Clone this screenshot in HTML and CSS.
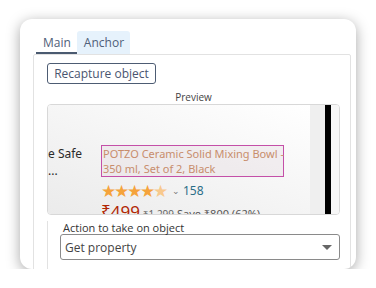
FILE: index.html
```html
<!DOCTYPE html>
<html lang="en">
<head>
  <meta charset="UTF-8">
  <title>Object settings</title>
  <link rel="stylesheet" href="styles.css">
</head>
<body>
  <div class="dialog">
    <div class="tabs">
      <span class="tab active">Main</span>
      <span class="tab hover">Anchor</span>
    </div>
    <div class="panel">
      <button class="recapture">Recapture object</button>
      <div class="preview-label">Preview</div>
      <div class="preview">
        <div class="shot">
          <div class="left-col">
            <div>e Safe</div>
            <div>...</div>
          </div>
          <div class="product">
            <div class="title">POTZO Ceramic Solid Mixing Bowl -<br>350 ml, Set of 2, Black</div>
            <div class="rating">
              <span class="stars">★★★★<span class="half">★</span></span>
              <span class="caret">⌄</span>
              <span class="count">158</span>
            </div>
            <div class="price">
              <span class="now">₹499</span>
              <span class="was">₹1,299</span>
              <span class="save">Save ₹800 (62%)</span>
            </div>
          </div>
        </div>
        <div class="scroll-gap"></div>
        <div class="scroll-bar"></div>
        <div class="scroll-rest"></div>
      </div>
      <div class="action">
        <label class="action-label">Action to take on object</label>
        <div class="select">
          <span>Get property</span>
          <span class="arrow"></span>
        </div>
      </div>
    </div>
  </div>
</body>
</html>
```

FILE: styles.css
```css
body {
  margin: 0;
  background-color: #fff;
  font-family: 'Open Sans', 'Noto Sans', sans-serif;
  color: #3c4658;
}
.dialog {
  margin: 19px 0 0 20px;
  width: 336px;
  height: 250px;
  box-sizing: border-box;
  padding: 12px 5px 0 13px;
  background-color: #fff;
  border-radius: 12px;
  box-shadow: 0 3px 14px rgba(0, 0, 0, 0.35);
  overflow: hidden;
}
.tabs {
  display: flex;
  margin-left: 3px;
  height: 23px;
}
.tab {
  font-size: 12px;
  color: #4f6079;
  padding: 3px 6px 0 7px;
  box-sizing: border-box;
  height: 23px;
}
.tab.active {
  border-bottom: 2px solid #4a5a70;
}
.tab.hover {
  background-color: #e6f2fc;
  border-radius: 3px 3px 0 0;
}
.panel {
  border: 1px solid #e2e2e2;
  border-radius: 2px;
  height: 240px;
  padding: 8px 10px 0 13px;
}
.recapture {
  display: block;
  font-family: inherit;
  font-size: 12px;
  color: #4a5570;
  background: #fff;
  border: 1px solid #4d5c73;
  border-radius: 3px;
  height: 21px;
  width: 109px;
  padding: 0;
}
.preview-label {
  text-align: center;
  font-size: 10px;
  color: #444;
  margin-top: 7px;
  line-height: 12px;
}
.preview {
  display: flex;
  height: 111px;
  box-sizing: border-box;
  border: 1px solid #d8d8d8;
  border-radius: 4px;
  overflow: hidden;
  margin-top: 1px;
}
.shot {
  flex: 1;
  display: flex;
  background: linear-gradient(200deg, #ffffff 0%, #f6f6f6 45%, #ebebeb 100%);
  padding-top: 40px;
  font-family: 'Noto Sans', sans-serif;
}
.left-col {
  width: 53px;
  font-size: 12px;
  color: #2a2a2a;
  line-height: 17px;
}
.product {
  font-size: 11px;
}
.title {
  color: #c88d6c;
  font-size: 11px;
  line-height: 15px;
  width: 180px;
  height: 30px;
  padding-left: 1px;
  border: 1px solid #c44fa8;
  background-color: rgba(230, 220, 225, 0.4);
  white-space: nowrap;
}
.rating {
  display: flex;
  align-items: center;
  margin-top: 5px;
  height: 16px;
}
.stars {
  color: #f5a33b;
  font-size: 17px;
  letter-spacing: -2px;
}
.half {
  color: #f8c98d;
}
.caret {
  color: #777;
  font-size: 9px;
  margin: 0 3px 0 6px;
}
.count {
  color: #2a6e87;
  font-size: 12px;
}
.price {
  margin-top: 2px;
  white-space: nowrap;
  color: #555;
}
.now {
  color: #b12704;
  font-size: 17px;
}
.was {
  font-size: 10px;
  color: #666;
  text-decoration: line-through;
}
.save {
  font-size: 11px;
  color: #555;
}
.scroll-gap {
  width: 15px;
  background-color: #efefef;
}
.scroll-bar {
  width: 6px;
  background-color: #000;
}
.scroll-rest {
  width: 8px;
  background-color: #f7f7f7;
}
.action {
  margin-top: 6px;
  border-left: 1px solid #e2e2e2;
  padding: 0 0 0 12px;
  height: 60px;
}
.action-label {
  display: block;
  font-size: 11px;
  color: #333;
  margin-left: 3px;
  line-height: 13px;
}
.select {
  display: flex;
  justify-content: space-between;
  align-items: center;
  height: 26px;
  box-sizing: border-box;
  border: 1px solid #8a8a8a;
  border-radius: 3px;
  padding: 0 7px 0 4px;
  font-size: 12px;
  color: #444;
  width: 280px;
}
.arrow {
  width: 0;
  height: 0;
  border-left: 5px solid transparent;
  border-right: 5px solid transparent;
  border-top: 5px solid #666;
}
```
